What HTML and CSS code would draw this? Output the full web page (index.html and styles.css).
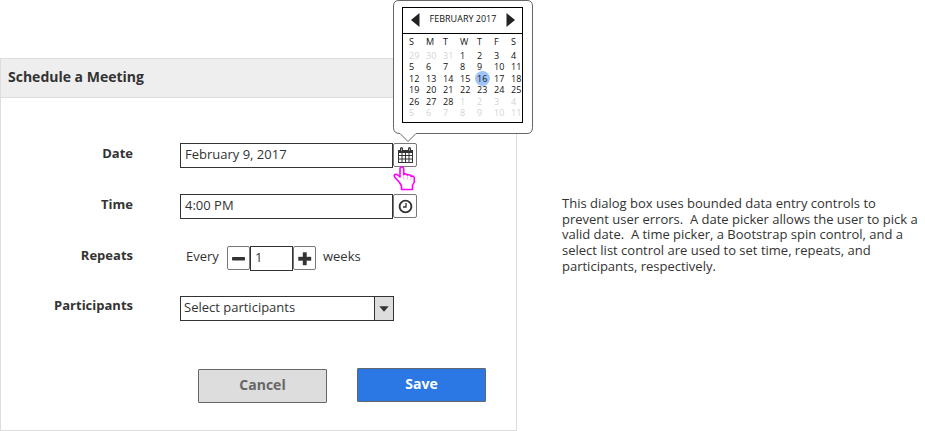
FILE: index.html
```html
<!DOCTYPE html>
<html lang="en">
<head>
<meta charset="utf-8">
<title>Schedule a Meeting</title>
<link rel="stylesheet" href="styles.css">
</head>
<body>
<main class="page">
  <section class="dialog">
    <h1 class="dialog-title">Schedule a Meeting</h1>
    <form class="form">
      <div class="row">
        <span class="label">Date</span>
        <div class="field">February 9, 2017</div>
        <button type="button" class="icon-btn">
          <svg width="17" height="17" viewBox="0 0 17 17"><path fill="#333" fill-rule="evenodd" d="M1 3h2V1.500a1.500 1.500 0 0 1 3 0V3h5V1.500a1.500 1.500 0 0 1 3 0V3h2v13H1zM2 6v2h2.500V6zM5.500 6v2H8V6zM9 6v2h2.500V6zM12.500 6v2H15V6zM2 9v2.500h2.500V9zM5.500 9v2.500H8V9zM9 9v2.500h2.500V9zM12.500 9v2.500H15V9zM2 12.500V15h2.500v-2.500zM5.500 12.500V15H8v-2.500zM9 12.500V15h2.500v-2.500zM12.500 12.500V15H15v-2.500zM4.200 1.500v2.300h.6V1.500zM12.200 1.500v2.300h.6V1.500z"/></svg>
        </button>
        <div class="popover">
          <svg class="bubble" width="141" height="143" viewBox="0 0 141 143"><path fill="#fff" stroke="#666" d="M6 .5H134Q139.500 .5 139.500 6V127.500Q139.500 133.500 134 133.500H23L15 141.500L7 133.500Q.5 133.500 .5 127.500V6Q.5 .5 6 .5Z"/></svg>
          <div class="calendar">
            <div class="month">
              <svg width="9" height="14" viewBox="0 0 9 14"><path fill="#222" d="M8.500 0v14L0 7z"/></svg>
              <span>FEBRUARY 2017</span>
              <svg width="9" height="14" viewBox="0 0 9 14"><path fill="#222" d="M.5 0v14L9 7z"/></svg>
            </div>
            <div class="days week"><span>S</span><span>M</span><span>T</span><span>W</span><span>T</span><span>F</span><span>S</span></div>
            <div class="days">
              <i>29</i><i>30</i><i>31</i><span>1</span><span>2</span><span>3</span><span>4</span>
              <span>5</span><span>6</span><span>7</span><span>8</span><span>9</span><span>10</span><span>11</span>
              <span>12</span><span>13</span><span>14</span><span>15</span><span class="today">16</span><span>17</span><span>18</span>
              <span>19</span><span>20</span><span>21</span><span>22</span><span>23</span><span>24</span><span>25</span>
              <span>26</span><span>27</span><span>28</span><i>1</i><i>2</i><i>3</i><i>4</i>
              <i>5</i><i>6</i><i>7</i><i>8</i><i>9</i><i>10</i><i>11</i>
            </div>
          </div>
        </div>
        <svg class="hand" width="24" height="25" viewBox="0 0 24 25"><path fill="#fff" stroke="#f0f" stroke-width="1.600" stroke-linejoin="round" d="M6.500 16.500L2 11.500Q.6 9.500 2 8.500Q3.500 7.700 5 9.200L7 11V3Q7 1 8.800 1T10.700 3V8.500Q11.500 7.500 13 8Q14 8.300 14.200 9.200Q15.500 8.300 17 9Q17.800 9.400 18 10.300Q21.300 9.500 21.300 12.500V16L19.500 19.500V23.500H8.500V20Z"/><path fill="none" stroke="#f0f" stroke-opacity=".3" d="M10.700 9v5M14.300 10v4M18 11v3"/></svg>
      </div>
      <div class="row">
        <span class="label">Time</span>
        <div class="field">4:00 PM</div>
        <button type="button" class="icon-btn">
          <svg width="15" height="15" viewBox="0 0 15 15"><circle cx="7.500" cy="7.500" r="5.900" fill="none" stroke="#333" stroke-width="1.900"/><path d="M8 4v4H5" fill="none" stroke="#333" stroke-width="1.300"/></svg>
        </button>
      </div>
      <div class="row repeats">
        <span class="label">Repeats</span>
        <span class="every">Every</span>
        <button type="button" class="icon-btn"><svg width="15" height="15" viewBox="0 0 15 15"><rect x="1" y="6" width="13" height="3.500" rx=".8" fill="#333"/></svg></button>
        <div class="field count">1</div>
        <button type="button" class="icon-btn"><svg width="15" height="15" viewBox="0 0 15 15"><path d="M1.500 6H6V1.500h3.500V6H14v3.500H9.500V14H6V9.500H1.500z" fill="#333" stroke="#333" stroke-width=".4" stroke-linejoin="round"/></svg></button>
        <span class="weeks">weeks</span>
      </div>
      <div class="row">
        <span class="label">Participants</span>
        <div class="field select"><span>Select participants</span><span class="arrow"><svg width="10" height="6" viewBox="0 0 10 6"><path d="M.3.300H9.700L5 5.700z" fill="#333"/></svg></span></div>
      </div>
      <div class="actions">
        <button type="button" class="btn cancel">Cancel</button>
        <button type="button" class="btn save">Save</button>
      </div>
    </form>
  </section>
  <p class="note">This dialog box uses bounded data entry controls to<br>prevent user errors.&nbsp; A date picker allows the user to pick a<br>valid date.&nbsp; A time picker, a Bootstrap spin control, and a<br>select list control are used to set time, repeats, and<br>participants, respectively.</p>
</main>
</body>
</html>
```
FILE: styles.css
```css
* { box-sizing: border-box; }
body {
  margin: 0;
  background: #fff;
  color: #333;
  font: 13px/18px "Open Sans", sans-serif;
}
.page {
  display: flex;
  align-items: flex-start;
  height: 431px;
  padding-top: 58px;
  overflow: hidden;
}
.dialog {
  width: 517px;
  height: 373px;
  border: 1px solid #ddd;
}
.dialog-title {
  height: 39px;
  margin: 0;
  padding: 0 7px;
  border-bottom: 1px solid #ddd;
  background: #eee;
  font-size: 14px;
  font-weight: 700;
  line-height: 36px;
}
.form { padding-top: 45px; }
.row {
  position: relative;
  display: flex;
  align-items: flex-start;
  height: 25px;
  margin-bottom: 26px;
}
.label {
  width: 132px;
  margin-right: 47px;
  font-weight: 700;
  line-height: 21px;
  text-align: right;
}
.field {
  width: 213px;
  height: 25px;
  padding: 0 4px;
  border: 1px solid #333;
  background: #fff;
  line-height: 20px;
}
.icon-btn {
  display: flex;
  align-items: center;
  justify-content: center;
  width: 24px;
  height: 24px;
  padding: 0;
  border: 1px solid #777;
  border-radius: 2px;
  background: #fff;
}
.repeats { margin-bottom: 25px; }
.every { width: 41px; margin-left: 6px; line-height: 22px; }
.repeats .icon-btn { width: 23px; margin-top: 1px; }
.count { width: 43px; margin-top: 1px; }
.weeks { margin-left: 7px; line-height: 22px; }
.select {
  display: flex;
  justify-content: space-between;
  width: 214px;
  margin-top: 1px;
  padding: 0 0 0 3px;
}
.arrow {
  display: flex;
  align-items: center;
  justify-content: center;
  width: 19px;
  border-left: 1px solid #333;
  background: #ddd;
}
.actions {
  display: flex;
  gap: 30px;
  margin-top: 48px;
  padding-left: 197px;
}
.btn {
  width: 129px;
  height: 34px;
  padding: 0 0 2px;
  border: 1px solid #666;
  border-radius: 1px;
  font: 700 14px/20px "Open Sans", sans-serif;
}
.cancel { margin-top: 1px; background: #ddd; color: #666; }
.save { background: #2b78e4; color: #fff; }
.note {
  margin: 138px 0 0 45px;
  font-size: 13px;
  line-height: 15.7px;
  white-space: nowrap;
}
.popover {
  position: absolute;
  top: -143px;
  left: 392px;
  width: 141px;
  height: 143px;
  padding: 7px 0 0 9px;
}
.bubble { position: absolute; top: 0; left: 0; }
.calendar {
  position: relative;
  width: 121px;
  height: 116px;
  border: 1px solid #000;
  color: #111;
  font-size: 9px;
  line-height: 11.4px;
}
.month {
  display: flex;
  align-items: center;
  justify-content: space-between;
  height: 26px;
  padding: 0 7px 2px 8px;
  border-bottom: 1px solid #000;
}
.month span { line-height: 20px; padding-bottom: 1px; }
.days {
  display: grid;
  grid-template-columns: repeat(7, 17px);
  padding-left: 6px;
}
.week { margin: 2px 0 2.500px; }
.days i { color: #d4d4d4; font-style: normal; }
.today {
  justify-self: start;
  width: 15px;
  height: 15px;
  margin: -2px -2.500px;
  padding: 2px 2.500px;
  border-radius: 50%;
  background: #9fc5f8;
}
.hand { position: absolute; top: 23px; left: 392px; }
```
